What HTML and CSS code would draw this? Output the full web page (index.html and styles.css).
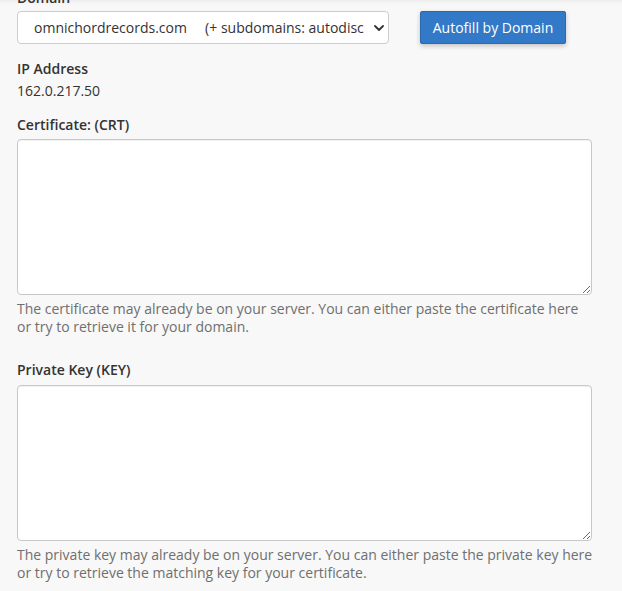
FILE: index.html
```html
<!DOCTYPE html>
<html lang="en">
<head>
<meta charset="utf-8">
<title>Install SSL</title>
<link rel="stylesheet" href="styles.css">
</head>
<body>
<form class="form">
  <div class="group group-domain">
    <label class="label" for="domain">Domain</label>
    <div class="domain-row">
      <div class="select-wrap">
        <select id="domain" class="select">
          <option>omnichordrecords.com&nbsp;&nbsp;&nbsp;&nbsp; (+ subdomains: autodiscover, cpanel, cpcalendars, cpcontacts, mail, webdisk, webmail, www)</option>
        </select>
        <svg class="chevron" width="10" height="6" viewBox="0 0 10 6" aria-hidden="true"><path d="M1 1 L5 5 L9 1" fill="none" stroke="#333" stroke-width="1.8" stroke-linecap="round" stroke-linejoin="round"/></svg>
      </div>
      <button type="button" class="btn">Autofill by Domain</button>
    </div>
  </div>
  <div class="group group-ip">
    <div class="label label-ip">IP Address</div>
    <div class="value">162.0.217.50</div>
  </div>
  <div class="group">
    <label class="label" for="crt">Certificate: (CRT)</label>
    <textarea id="crt" class="area"></textarea>
    <p class="help">The certificate may already be on your server. You can either paste the certificate here or try to retrieve it for your domain.</p>
  </div>
  <div class="group">
    <label class="label label-key" for="key">Private Key (KEY)</label>
    <textarea id="key" class="area"></textarea>
    <p class="help">The private key may already be on your server. You can either paste the private key here or try to retrieve the matching key for your certificate.</p>
  </div>
</form>
</body>
</html>
```

FILE: styles.css
```css
html {
  background: #f8f8f8 linear-gradient(to bottom, #ececec 0px, #f5f5f5 3px, #f8f8f8 6px) no-repeat;
  background-size: 100% 6px;
}
html, body {
  margin: 0;
  padding: 0;
}
body {
  font-family: "Open Sans", "Liberation Sans", sans-serif;
  font-size: 14px;
  color: #333;
  overflow: hidden;
}
.form {
  margin-top: -12px;
  padding-left: 17px;
  width: 575px;
}
.group {
  margin: 0;
}
.group-domain {
  margin-bottom: 15px;
}
.group-ip {
  margin-bottom: 14px;
}
.label {
  display: block;
  font-weight: 600;
  line-height: 20px;
  margin-bottom: 4px;
}
.group-domain .label {
  margin-bottom: 3px;
}
.label-ip {
  margin-bottom: 2px;
}
.value {
  line-height: 20px;
}
.domain-row {
  display: flex;
  align-items: flex-start;
  gap: 31px;
}
.select-wrap {
  position: relative;
  width: 372px;
  height: 33px;
}
.select {
  appearance: none;
  -webkit-appearance: none;
  box-sizing: border-box;
  width: 372px;
  height: 33px;
  margin: 0;
  padding: 0 24px 0 16px;
  border: 1px solid #ccc;
  border-radius: 4px;
  background: #fff;
  font-family: "Open Sans", "Liberation Sans", sans-serif;
  font-size: 14px;
  color: #333;
  white-space: pre;
}
.chevron {
  position: absolute;
  right: 5px;
  top: 14px;
  pointer-events: none;
}
.btn {
  box-sizing: border-box;
  width: 146px;
  height: 33px;
  margin: 0;
  padding: 0;
  border: 1px solid #2b69ad;
  border-radius: 2px;
  background: #3279c7;
  color: #fff;
  font-family: "Open Sans", "Liberation Sans", sans-serif;
  font-size: 14px;
  line-height: 31px;
  box-shadow: 0 2px 5px rgba(0, 0, 0, 0.22);
  cursor: pointer;
}
.area {
  display: block;
  box-sizing: border-box;
  width: 575px;
  height: 156px;
  margin: 0;
  padding: 6px 12px;
  border: 1px solid #c8c8c8;
  border-radius: 4px;
  background: #fff;
  box-shadow: inset 0 1px 1px rgba(0, 0, 0, 0.06);
  font-family: "Open Sans", "Liberation Sans", sans-serif;
  font-size: 14px;
}
.help {
  margin: 5px -3px 25px 0;
  color: #6f6f6f;
  font-size: 14px;
  line-height: 17.5px;
}
.label-key {
  margin-bottom: 5px;
}
```
